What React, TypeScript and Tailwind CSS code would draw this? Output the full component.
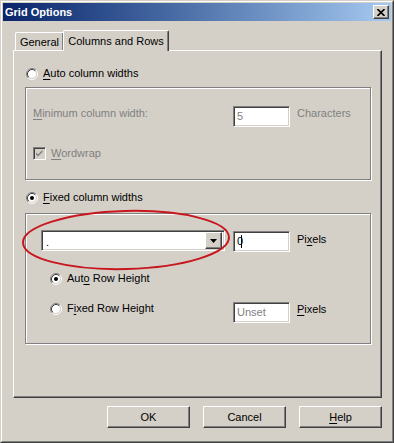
import React from "react";

const sunken =
  "border border-t-[#808080] border-l-[#808080] border-r-white border-b-white shadow-[inset_1px_1px_0_#404040,inset_-1px_-1px_0_#d4d0c8]";
const raised =
  "border border-t-white border-l-white border-r-[#404040] border-b-[#404040] shadow-[inset_-1px_-1px_0_#808080]";
const etched =
  "border border-[#808080] shadow-[inset_1px_1px_0_#fff,1px_1px_0_#fff]";

const Radio = ({ checked = false }: { checked?: boolean }) => (
  <svg width="12" height="12" viewBox="0 0 12 12" className="shrink-0">
    <circle cx="6" cy="6" r="4.5" fill="#fff" />
    <path d="M2.11 9.89 A5.5 5.5 0 0 1 9.89 2.11" stroke="#808080" fill="none" />
    <path d="M9.89 2.11 A5.5 5.5 0 0 1 2.11 9.89" stroke="#fff" fill="none" />
    <path d="M2.82 9.18 A4.5 4.5 0 0 1 9.18 2.82" stroke="#404040" fill="none" />
    <path d="M9.18 2.82 A4.5 4.5 0 0 1 2.82 9.18" stroke="#d4d0c8" fill="none" />
    {checked && <circle cx="6" cy="6" r="2" fill="#000" />}
  </svg>
);

const CheckBox = () => (
  <div className={`w-[13px] h-[13px] shrink-0 bg-[#d4d0c8] ${sunken} flex items-center justify-center`}>
    <svg width="9" height="9" viewBox="0 0 9 9">
      <path d="M1 3.5 L3 5.5 L7.5 1 L7.5 3 L3 7.5 L1 5.5 Z" fill="#808080" />
    </svg>
  </div>
);

const Edit = ({ text, disabled, caret }: { text: string; disabled?: boolean; caret?: boolean }) => (
  <div
    className={`w-[57px] h-[21px] shrink-0 bg-white ${sunken} flex items-center pl-[3px] ${
      disabled ? "text-[#808080]" : "text-black"
    }`}
  >
    <span>{text}</span>
    {caret && <span className="w-px h-[13px] bg-black -ml-[2px]"></span>}
  </div>
);

const U = ({ children }: { children: React.ReactNode }) => <span className="underline underline-offset-[2px]">{children}</span>;

export default function App() {
  return (
    <div className="relative w-[394px] h-[443px] bg-[#d4d0c8] font-['Liberation_Sans',Arial,sans-serif] text-[11px] leading-[13px] text-black border border-t-[#d4d0c8] border-l-[#d4d0c8] border-r-[#404040] border-b-[#404040]">
      <div className="h-full flex flex-col p-px border border-t-white border-l-white border-r-[#808080] border-b-[#808080]">
        {/* title bar */}
        <div className="h-[18px] flex items-center justify-between bg-gradient-to-r from-[#0a246a] to-[#a6caf0] pl-[2px] pr-[2px]">
          <span className="text-white font-bold">Grid Options</span>
          <div className={`w-[16px] h-[14px] bg-[#d4d0c8] ${raised} flex items-center justify-center`}>
            <svg width="8" height="7" viewBox="0 0 8 7">
              <path d="M0.5 0 L7.5 7 M7.5 0 L0.5 7" stroke="#000" strokeWidth="1.6" />
            </svg>
          </div>
        </div>

        {/* tabs */}
        <div className="mt-[9px] h-[20px] flex items-end pl-[12px]">
          <div className="w-[48px] h-[18px] border-t border-l border-white rounded-tl-[2px] shadow-[inset_-1px_0_0_#808080] flex items-center justify-center pt-[1px]">
            General
          </div>
          <div className="relative z-10 -mb-px w-[106px] h-[21px] bg-[#d4d0c8] border-t border-l border-white border-r border-r-[#404040] rounded-tl-[2px] rounded-tr-[2px] shadow-[inset_-1px_0_0_#808080] flex items-start justify-center pt-[4px]">
            Columns and Rows
          </div>
        </div>

        {/* panel */}
        <div className={`ml-[10px] w-[369px] h-[348px] ${raised} flex flex-col`}>
          <div className="mt-[16px] ml-[12px] h-[13px] flex items-center gap-[5px]">
            <Radio />
            <span>
              <U>A</U>uto column widths
            </span>
          </div>

          <div className={`mt-[7px] ml-[11px] w-[346px] h-[93px] ${etched} flex flex-col`}>
            <div className="mt-[18px] pl-[7px] h-[21px] flex items-start text-[#808080]">
              <span className="w-[200px] shrink-0 mt-[1px]">
                <U>M</U>inimum column width:
              </span>
              <Edit text="5" disabled />
              <span className="ml-[7px] mt-[1px]">Characters</span>
            </div>
            <div className="mt-[20px] pl-[7px] h-[13px] flex items-center gap-[5px] text-[#808080]">
              <CheckBox />
              <span>
                <U>W</U>ordwrap
              </span>
            </div>
          </div>

          <div className="mt-[11px] ml-[12px] h-[13px] flex items-center gap-[5px]">
            <Radio checked />
            <span>
              <U>F</U>ixed column widths
            </span>
          </div>

          <div className={`mt-[9px] ml-[11px] w-[346px] h-[131px] ${etched} flex flex-col`}>
            <div className="mt-[16px] pl-[15px] h-[22px] flex items-start">
              <div className={`w-[184px] h-[21px] shrink-0 bg-white ${sunken} flex items-center justify-between p-[2px]`}>
                <span className="pl-[2px] pt-[3px]">.</span>
                <div className={`w-[17px] h-[17px] bg-[#d4d0c8] ${raised} flex items-center justify-center`}>
                  <svg width="7" height="4" viewBox="0 0 7 4">
                    <path d="M0 0 H7 L3.5 4 Z" fill="#000" />
                  </svg>
                </div>
              </div>
              <div className="ml-[8px] mt-px">
                <Edit text="0" caret />
              </div>
              <span className="ml-[7px] mt-[3px]">
                Pi<U>x</U>els
              </span>
            </div>

            <div className="mt-[20px] pl-[24px] h-[13px] flex items-center gap-[5px]">
              <Radio checked />
              <span>
                Aut<U>o</U> Row Height
              </span>
            </div>

            <div className="mt-[17px] pl-[24px] h-[21px] flex items-start">
              <div className="w-[183px] shrink-0 flex items-center gap-[5px]">
                <Radio />
                <span>
                  F<U>i</U>xed Row Height
                </span>
              </div>
              <Edit text="Unset" disabled />
              <span className="ml-[7px] mt-px">
                <U>P</U>ixels
              </span>
            </div>
          </div>
        </div>

        {/* buttons */}
        <div className="mt-[8px] flex justify-end gap-[13px] pr-[9px]">
          <button className={`w-[83px] h-[22px] ${raised} bg-[#d4d0c8]`}>OK</button>
          <button className={`w-[83px] h-[22px] ${raised} bg-[#d4d0c8]`}>Cancel</button>
          <button className={`w-[83px] h-[22px] ${raised} bg-[#d4d0c8]`}>
            <U>H</U>elp
          </button>
        </div>
      </div>

      {/* red annotation */}
      <svg className="absolute left-0 top-0 pointer-events-none" width="394" height="443">
        <ellipse cx="125" cy="239" rx="103" ry="29" fill="none" stroke="#c8161e" strokeWidth="2" transform="rotate(-1.5 125 239)" />
      </svg>
    </div>
  );
}
